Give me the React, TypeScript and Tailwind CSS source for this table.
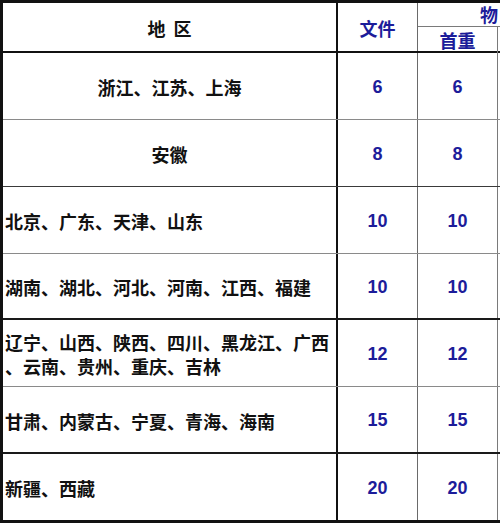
const cjk = '"Noto Sans CJK SC", "Noto Sans", sans-serif';
const num = '"Liberation Sans", Arial, sans-serif';

type Row = {
  region: string[];
  center?: boolean;
  value: number;
  h: string;
  line: string;
};

const rows: Row[] = [
  { region: ['浙江、江苏、上海'], center: true, value: 6, h: 'h-[67px]', line: 'border-b border-[#8a8a8a]' },
  { region: ['安徽'], center: true, value: 8, h: 'h-[67px]', line: 'border-b border-[#3a3a3a]' },
  { region: ['北京、广东、天津、山东'], value: 10, h: 'h-[67px]', line: 'border-b border-[#8a8a8a]' },
  { region: ['湖南、湖北、河北、河南、江西、福建'], value: 10, h: 'h-[66px]', line: 'border-b-2 border-[#1a1a1a]' },
  { region: ['辽宁、山西、陕西、四川、黑龙江、广西', '、云南、贵州、重庆、吉林'], value: 12, h: 'h-[67px]', line: 'border-b border-[#8a8a8a]' },
  { region: ['甘肃、内蒙古、宁夏、青海、海南'], value: 15, h: 'h-[67px]', line: 'border-b-2 border-[#1a1a1a]' },
  { region: ['新疆、西藏'], value: 20, h: 'h-[66px]', line: '' },
];

export default function App() {
  return (
    <div className="w-[500px] h-[523px] overflow-hidden bg-white">
      <div className="w-[500px] border-t-[3px] border-l-[3px] border-b-[3px] border-[#111]">
        {/* header */}
        <div className="flex h-[50px] border-b-2 border-[#111]">
          <div
            className="w-[335px] shrink-0 flex items-center justify-center pt-[2px] border-r-[2px] border-[#111] text-[18px] font-bold text-[#111]"
            style={{ fontFamily: cjk }}
          >
            地&nbsp;&nbsp;区
          </div>
          <div
            className="w-[80px] shrink-0 flex items-center justify-center pt-[2px] border-r border-[#6a6a6a] text-[18px] font-bold text-[#1c1c9a]"
            style={{ fontFamily: cjk }}
          >
            文件
          </div>
          <div className="flex-1 flex flex-col" style={{ fontFamily: cjk }}>
            <div className="h-[24px] flex items-center justify-end pr-[2px] border-b border-[#7a7a7a] text-[18px] font-bold text-[#1c1c9a]">
              物
            </div>
            <div className="flex-1 flex">
              <div className="w-[80px] flex items-center justify-center border-r border-[#7a7a7a] text-[18px] font-bold text-[#1c1c9a]">
                首重
              </div>
              <div className="flex-1" />
            </div>
          </div>
        </div>

        {rows.map((r, i) => (
          <div key={i} className={`flex ${r.h} ${r.line}`}>
            <div
              className={`w-[335px] shrink-0 flex flex-col justify-center pt-[2px] border-r-[2px] border-[#111] text-[18px] leading-[24px] font-bold text-[#111] ${
                r.center ? 'items-center' : 'items-start pl-[2px]'
              }`}
              style={{ fontFamily: cjk }}
            >
              {r.region.map((t, j) => (
                <span key={j} className="whitespace-nowrap">
                  {t}
                </span>
              ))}
            </div>
            <div
              className="w-[80px] shrink-0 flex items-center justify-center pt-[2px] border-r border-[#6a6a6a] text-[18px] font-bold text-[#1c1c9a]"
              style={{ fontFamily: num }}
            >
              {r.value}
            </div>
            <div
              className="w-[80px] shrink-0 flex items-center justify-center pt-[2px] border-r border-[#7a7a7a] text-[18px] font-bold text-[#1c1c9a]"
              style={{ fontFamily: num }}
            >
              {r.value}
            </div>
            <div className="flex-1" />
          </div>
        ))}
      </div>
    </div>
  );
}
